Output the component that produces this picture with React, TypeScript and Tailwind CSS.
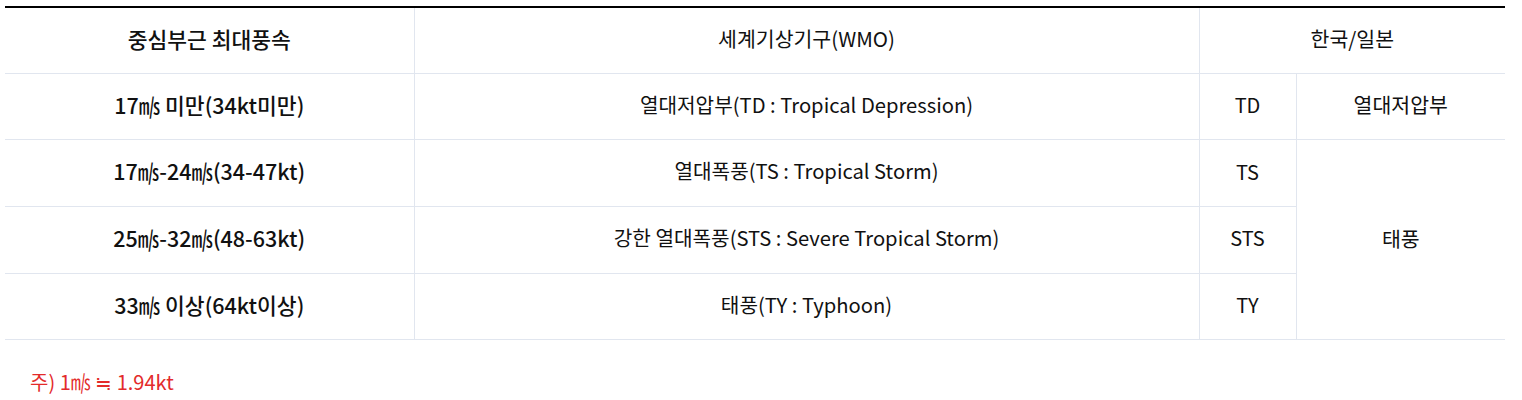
import React from 'react';

type Row = {
  speed: string;
  wmo: string;
  code: string;
};

const rows: Row[] = [
  { speed: '17㎧ 미만(34kt미만)', wmo: '열대저압부(TD : Tropical Depression)', code: 'TD' },
  { speed: '17㎧-24㎧(34-47kt)', wmo: '열대폭풍(TS : Tropical Storm)', code: 'TS' },
  { speed: '25㎧-32㎧(48-63kt)', wmo: '강한 열대폭풍(STS : Severe Tropical Storm)', code: 'STS' },
  { speed: '33㎧ 이상(64kt이상)', wmo: '태풍(TY : Typhoon)', code: 'TY' },
];

const cell = 'border border-[#e1e6ef] text-center align-middle';

const App = () => {
  return (
    <div
      className="bg-white pt-[6px] text-[#111]"
      style={{ fontFamily: '"Noto Sans CJK KR", "Noto Sans", sans-serif' }}
    >
      <table className="ml-[5px] w-[1500px] border-collapse border-t-2 border-t-black table-fixed">
        <colgroup>
          <col className="w-[409px]" />
          <col className="w-[785px]" />
          <col className="w-[97px]" />
          <col className="w-[209px]" />
        </colgroup>
        <thead>
          <tr className="h-[66px]">
            <th className={`${cell} border-l-0 border-t-black text-[21.5px] font-medium pb-[3px]`}>중심부근 최대풍속</th>
            <th className={`${cell} border-t-black text-[20.5px] font-normal pb-[3px]`}>세계기상기구(WMO)</th>
            <th colSpan={2} className={`${cell} border-r-0 border-t-black text-[20.5px] font-normal pb-[3px]`}>
              한국/일본
            </th>
          </tr>
        </thead>
        <tbody>
          {rows.map((r, i) => (
            <tr key={r.code} className="h-[66.7px]">
              <td className={`${cell} border-l-0 text-[21.5px] font-medium pb-[3px]`}>{r.speed}</td>
              <td className={`${cell} text-[20.2px] pb-[3px]`}>{r.wmo}</td>
              <td className={`${cell} text-[20px] pb-[3px]`}>{r.code}</td>
              {i === 0 && <td className={`${cell} border-r-0 text-[20.5px] pb-[3px]`}>열대저압부</td>}
              {i === 1 && (
                <td rowSpan={3} className={`${cell} border-r-0 text-[20.5px] pb-[3px]`}>
                  태풍
                </td>
              )}
            </tr>
          ))}
        </tbody>
      </table>
      <p className="pl-[30px] pt-[28px] text-[20px] leading-[28px] text-[#e32b2b]">주) 1㎧ ≒ 1.94kt</p>
    </div>
  );
};

export default App;
